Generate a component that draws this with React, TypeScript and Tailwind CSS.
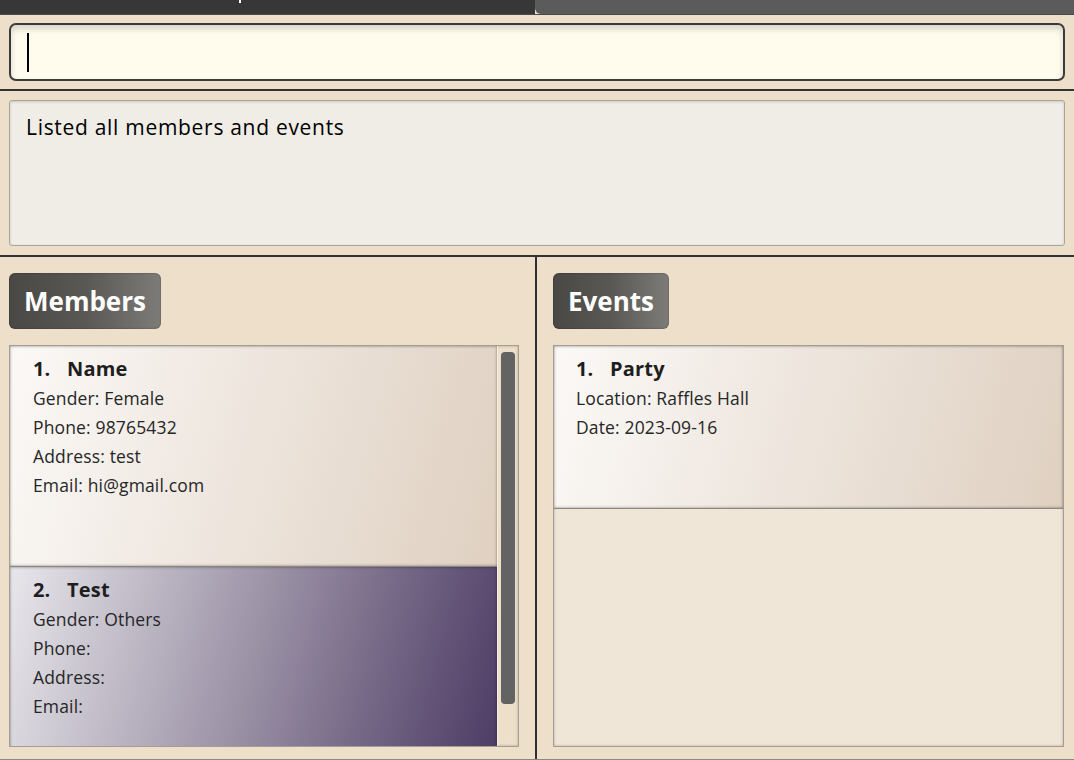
import React from 'react';

const font = { fontFamily: '"Open Sans", "Noto Sans", sans-serif' };

type Member = { name: string; gender: string; phone: string; address: string; email: string };

const members: Member[] = [
  { name: 'Name', gender: 'Female', phone: '98765432', address: 'test', email: 'hi@gmail.com' },
  { name: 'Test', gender: 'Others', phone: '', address: '', email: '' },
];

const PanelTitle = ({ label }: { label: string }) => (
  <div className="h-[56px] self-start flex items-center px-[15px] rounded-[6px] bg-linear-to-r from-[#4a4844] via-[#5a5854] to-[#7e7c78] shadow-[inset_0_0_2px_rgba(0,0,0,0.4)]">
    <span className="text-white font-bold text-[26px] leading-none">{label}</span>
  </div>
);

const CardTitle = ({ idx, text }: { idx: number; text: string }) => (
  <div className="flex font-bold text-[20px] leading-[30px] text-[#1e1e1e]">
    <span className="w-[34px]">{idx}.</span>
    <span className="tracking-[0.2px]">{text}</span>
  </div>
);

const Line = ({ children }: { children: React.ReactNode }) => (
  <div className="text-[17.5px] leading-[29px] text-[#262626] whitespace-pre tracking-[0.15px]">{children}</div>
);

export default function App() {
  return (
    <div className="w-[1074px] h-[760px] flex flex-col bg-[#eddfca] overflow-hidden" style={font}>
      {/* menu bar */}
      <div className="h-[15px] flex border-b border-[#4a4a4a] shrink-0">
        <div className="w-[535px] bg-[#373737] relative">
          <div className="absolute left-[239px] top-0 w-[2px] h-[3px] bg-white" />
        </div>
        <div className="flex-1 bg-[#5b5b5b] rounded-bl-[6px]" />
      </div>

      {/* command box */}
      <div className="px-[9px] pt-[8px] pb-[8px] shrink-0">
        <div className="h-[58px] rounded-[7px] border-2 border-[#3b3b3b] bg-[#fffcee] shadow-[inset_0_4px_6px_rgba(0,0,0,0.16)] flex items-center pl-[16px]">
          <div className="w-[1.5px] h-[39px] bg-black" />
        </div>
      </div>
      <div className="h-[2px] bg-[#333333] shrink-0" />

      {/* result box */}
      <div className="px-[9px] py-[9px] shrink-0">
        <div className="h-[146px] rounded-[3px] border border-[#a8a49c] bg-[#efede6] shadow-[inset_0_1px_3px_rgba(0,0,0,0.15)] px-[16px] pt-[11px]">
          <div className="text-[21px] leading-[30px] text-black tracking-[0.7px]">Listed all members and events</div>
        </div>
      </div>
      <div className="h-[2px] bg-[#333333] shrink-0" />

      {/* lists */}
      <div className="flex-1 flex min-h-0 border-b border-[#8c887f]">
        <div className="w-[535px] flex flex-col pl-[9px] pr-[16px] pt-[16px] gap-[16px]">
          <PanelTitle label="Members" />
          <div className="h-[402px] flex border border-[#a39d92] bg-[#eddfca] shadow-[inset_0_0_3px_rgba(0,0,0,0.25)] overflow-hidden">
            <div className="w-[487px] flex flex-col">
              <div className="h-[221px] shrink-0 bg-linear-105 from-[#fbf9f7] to-[#dfd0c1] pl-[23px] pt-[8px] shadow-[inset_0_0_3px_rgba(0,0,0,0.45)] border-b border-[#8a8580]">
                <CardTitle idx={1} text={members[0].name} />
                <Line>Gender: {members[0].gender}</Line>
                <Line>Phone: {members[0].phone}</Line>
                <Line>Address: {members[0].address}</Line>
                <Line>Email: {members[0].email}</Line>
              </div>
              <div className="h-[221px] shrink-0 bg-linear-105 from-[#e8e7eb] via-[#9990a4] to-[#4b3962] pl-[23px] pt-[8px] shadow-[inset_0_0_3px_rgba(0,0,0,0.45)]">
                <CardTitle idx={2} text={members[1].name} />
                <Line>Gender: {members[1].gender}</Line>
                <Line>Phone: {members[1].phone}</Line>
                <Line>Address: {members[1].address}</Line>
                <Line>Email: {members[1].email}</Line>
              </div>
            </div>
            <div className="flex-1 pt-[6px] flex justify-center border-l border-[#f5efe5]">
              <div className="w-[14px] h-[352px] rounded-[4px] bg-[#636363]" />
            </div>
          </div>
        </div>

        <div className="w-[2px] bg-[#2e2e2e]" />

        <div className="flex-1 flex flex-col pl-[16px] pr-[10px] pt-[16px] gap-[16px]">
          <PanelTitle label="Events" />
          <div className="h-[402px] flex flex-col border border-[#a39d92] bg-[#f0e6d8] shadow-[inset_0_0_3px_rgba(0,0,0,0.25)] overflow-hidden">
            <div className="h-[163px] shrink-0 bg-linear-105 from-[#fbf9f7] to-[#dfd0c1] pl-[22px] pt-[8px] shadow-[inset_0_0_3px_rgba(0,0,0,0.45)] border-b border-[#8a8580]">
              <CardTitle idx={1} text="Party" />
              <Line>Location: Raffles Hall</Line>
              <Line>Date: 2023-09-16</Line>
            </div>
          </div>
        </div>
      </div>
    </div>
  );
}
